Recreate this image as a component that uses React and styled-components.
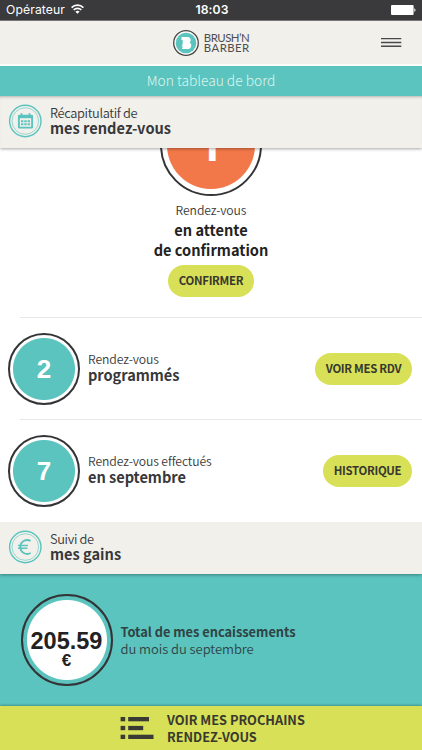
import styled, { createGlobalStyle } from "styled-components"

export default function App() {
    return (
        <Screen>
            <GlobalStyle />
            <StatusBar>
                <Operator>
                    Opérateur
                    <WifiIcon />
                </Operator>
                <Clock>18:03</Clock>
                <BatteryIcon />
            </StatusBar>

            <Header>
                <Logo>
                    <LogoMark />
                    <LogoName>
                        <LogoLine $spacing="-0.5px">BRUSH’N</LogoLine>
                        <LogoLine $spacing="0.45px">BARBER</LogoLine>
                    </LogoName>
                </Logo>
                <BurgerIcon />
            </Header>
            <PageTitle>Mon tableau de bord</PageTitle>

            <SectionHeader $raised>
                <CalendarIcon />
                <SectionText>
                    <Line $size={12.8} $height={15} $spacing={-0.34}>Récapitulatif de</Line>
                    <Line $size={14.6} $height={16} $bold>mes rendez-vous</Line>
                </SectionText>
            </SectionHeader>

            <Scroll>
                <Pending>
                    <Ring $size={102} $gap={5} $fill="#f37849">
                        <PendingNumber>1</PendingNumber>
                    </Ring>
                    <PendingText>
                        <Line $size={12.2} $height={19} $spacing={-0.1}>Rendez-vous</Line>
                        <Line $size={14.6} $height={20} $bold $color="#222223">en attente</Line>
                        <Line $size={14.6} $height={20} $bold $color="#222223">de confirmation</Line>
                    </PendingText>
                    <Button $width={86}>CONFIRMER</Button>
                </Pending>
                <Divider />
                <Row number="2" title="Rendez-vous" detail="programmés" action="VOIR MES RDV" width={97} />
                <Divider />
                <Row number="7" title="Rendez-vous effectués" detail="en septembre" action="HISTORIQUE" width={89} />
            </Scroll>

            <SectionHeader>
                <EuroIcon />
                <SectionText>
                    <Line $size={12.8} $height={15} $spacing={-0.34}>Suivi de</Line>
                    <Line $size={14.6} $height={16} $bold>mes gains</Line>
                </SectionText>
            </SectionHeader>

            <Earnings>
                <Ring $size={92} $gap={4} $fill="#ffffff">
                    <Amount>205.59</Amount>
                    <Currency>€</Currency>
                </Ring>
                <EarningsText>
                    <Line $size={12.8} $height={17} $bold>Total de mes encaissements</Line>
                    <Line $size={13} $height={18} $spacing={-0.05}>du mois du septembre</Line>
                </EarningsText>
            </Earnings>

            <Footer>
                <ListIcon />
                <FooterText>
                    <Line $size={12.75} $height={17.5} $bold>VOIR MES PROCHAINS</Line>
                    <Line $size={12.75} $height={17.5} $bold>RENDEZ-VOUS</Line>
                </FooterText>
            </Footer>
        </Screen>
    )
}

function Row({ number, title, detail, action, width }) {
    return (
        <RowBox>
            <Ring $size={72} $gap={3} $fill="#5bc4be">
                <RowNumber>{number}</RowNumber>
            </Ring>
            <RowText>
                <Line $size={12.2} $height={16} $spacing={-0.1}>{title}</Line>
                <Line $size={14.6} $height={16} $spacing={-0.04} $bold>{detail}</Line>
            </RowText>
            <Button $width={width}>{action}</Button>
        </RowBox>
    )
}

function WifiIcon() {
    return (
        <svg width="13" height="10" viewBox="0 0 13 10" fill="none" stroke="#fff" strokeWidth="1.6">
            <path d="M0.6 3.6a8.3 8.3 0 0 1 11.8 0" />
            <path d="M2.7 5.9a5.4 5.4 0 0 1 7.6 0" />
            <path d="M6.5 9.8 4.4 7.7a3 3 0 0 1 4.2 0z" fill="#fff" stroke="none" />
        </svg>
    )
}

function BatteryIcon() {
    return (
        <svg width="25" height="10" viewBox="0 0 25 10" fill="#fff">
            <rect width="22.6" height="10" rx="1" />
            <path d="M23.3 3.2c1.6.4 1.6 3.2 0 3.6z" />
        </svg>
    )
}

function BurgerIcon() {
    return (
        <svg width="21" height="12" viewBox="0 0 21 12" stroke="#48484a" strokeWidth="1.4">
            <path d="M0 1.6h20.3M0 5.5h20.3M0 9.3h20.3" />
        </svg>
    )
}

function LogoMark() {
    return (
        <svg width="27" height="27" viewBox="0 0 27 27">
            <circle cx="13" cy="13" r="12.3" fill="#fafaf7" stroke="#47474a" strokeWidth="1.3" />
            <circle cx="13" cy="13" r="10.3" fill="#5bc4be" />
            <path
                d="M8.500 6.900h5.600c2.300 0 3.600 1.100 3.600 3 0 1.200-.5 2-1.300 2.500 1.200.5 1.900 1.500 1.900 3 0 2.300-1.500 3.700-4 3.700H8.900v-1h.8v-.8h-.8v-1h.8v-.8h-.8v-1h.8V10H8.500z"
                fill="#fff"
            />
        </svg>
    )
}

function CalendarIcon() {
    return (
        <svg width="34" height="34" viewBox="0 0 34 34" fill="none" stroke="#5bc4be">
            <circle cx="17.3" cy="17" r="15.7" strokeWidth="1.4" />
            <circle cx="17.3" cy="17" r="13.3" strokeWidth="0.6" />
            <rect x="10.9" y="11.8" width="13.2" height="11.8" rx="0.6" strokeWidth="1.9" />
            <path d="M10.2 12.6h14.6" strokeWidth="3.2" />
            <path d="M13.5 9.3v3M21.5 9.3v3" strokeWidth="1.8" />
            <path d="M13 17.3h9M13 20.3h9" strokeWidth="2" strokeDasharray="2.4 0.9" />
        </svg>
    )
}

function EuroIcon() {
    return (
        <svg width="34" height="34" viewBox="0 0 34 34" fill="none" stroke="#5bc4be">
            <circle cx="17.3" cy="17" r="15.7" strokeWidth="1.4" />
            <circle cx="17.3" cy="17" r="13.3" strokeWidth="0.6" />
            <path d="M22.6 11a6.9 6.9 0 1 0 0 12" strokeWidth="1.9" />
            <path d="M10 15.5h10M10 18.2h9.4" strokeWidth="1.5" />
        </svg>
    )
}

function ListIcon() {
    return (
        <svg width="34" height="24" viewBox="0 0 34 24" fill="#3a3a35">
            <rect x="0.6" y="1" width="4.6" height="4.3" />
            <rect x="8.2" y="1" width="20.8" height="4.3" />
            <rect x="0.6" y="9.9" width="4.6" height="4.3" />
            <rect x="8.2" y="9.9" width="15" height="4.3" />
            <rect x="0.6" y="18.7" width="4.6" height="4.3" />
            <rect x="8.2" y="18.7" width="25.3" height="4.3" />
        </svg>
    )
}

const GlobalStyle = createGlobalStyle`
    * {
        box-sizing: border-box;
    }
    body {
        margin: 0;
        font-family: "Noto Sans CJK SC", "Open Sans", sans-serif;
        color: #38383a;
    }
    svg {
        flex: none;
        display: block;
    }
`
const Screen = styled.div`
    display: flex;
    flex-direction: column;
    width: 422px;
    height: 750px;
    overflow: hidden;
    background-color: #ffffff;
`
const StatusBar = styled.div`
    display: grid;
    grid-template-columns: 1fr auto 1fr;
    align-items: center;
    flex: none;
    height: 21px;
    padding: 0 6px;
    background-color: #3a3a3c;
    border-bottom: 1px solid #77777a;
    color: #ffffff;
    font-family: Inter, sans-serif;
    font-size: 12.2px;
    line-height: 20px;

    > svg {
        justify-self: end;
        margin-top: -1px;
    }
`
const Operator = styled.div`
    display: flex;
    align-items: center;
    gap: 6px;
    letter-spacing: 0.1px;
    svg {
        margin-top: -2px;
    }
`
const Clock = styled.div`
    padding-left: 2px;
    font-weight: 600;
    letter-spacing: 0.1px;
`
const Header = styled.div`
    display: grid;
    grid-template-columns: 1fr auto 1fr;
    align-items: center;
    flex: none;
    height: 45px;
    padding: 0 20.5px;
    background-color: #f1f0eb;
    border-bottom: 2px solid #fafcfa;

    > svg {
        justify-self: end;
    }
`
const Logo = styled.div`
    grid-column: 2;
    display: flex;
    align-items: center;
    gap: 3.5px;
    padding-left: 1px;
    margin-top: 1px;
`
const LogoName = styled.div`
    display: flex;
    flex-direction: column;
    margin-top: -1px;
`
const LogoLine = styled.div`
    height: 10px;
    font-family: Lato, sans-serif;
    font-size: 11.4px;
    line-height: 10px;
    letter-spacing: ${(props) => props.$spacing};
    color: #4d4d4f;
`
const PageTitle = styled.div`
    flex: none;
    height: 30px;
    background-color: #5bc4be;
    color: #dff5f2;
    font-size: 13.8px;
    font-weight: 300;
    line-height: 28px;
    text-align: center;
`
const SectionHeader = styled.div`
    position: relative;
    z-index: 1;
    display: flex;
    align-items: center;
    flex: none;
    gap: 8px;
    height: 52px;
    padding: 0 8px;
    background-color: #f1f0eb;
    box-shadow: 0 1px 3px rgba(0, 0, 0, 0.35)${(props) => (props.$raised ? ", inset 0 3px 3px -2px rgba(0, 0, 0, 0.25)" : "")};
    clip-path: inset(0 0 -6px 0);
    svg {
        margin-top: -3px;
    }
`
const SectionText = styled.div`
    margin-top: -3px;
`
const Line = styled.div`
    height: ${(props) => props.$height}px;
    font-size: ${(props) => props.$size}px;
    font-weight: ${(props) => (props.$bold ? 700 : 350)};
    line-height: ${(props) => props.$height}px;
    letter-spacing: ${(props) => props.$spacing || 0}px;
    color: ${(props) => props.$color || "inherit"};
    white-space: nowrap;
`
const Scroll = styled.div`
    flex: none;
    height: 374px;
    overflow: hidden;
`
/* the list is scrolled, the first ring goes under the section header */
const Pending = styled.div`
    display: flex;
    flex-direction: column;
    align-items: center;
    height: 223px;
    margin-top: -54px;
`
const Ring = styled.div`
    display: flex;
    flex-direction: column;
    align-items: center;
    justify-content: center;
    flex: none;
    width: ${(props) => props.$size}px;
    height: ${(props) => props.$size}px;
    border: 2px solid #343438;
    border-radius: 50%;
    background: radial-gradient(
        circle closest-side,
        ${(props) => props.$fill} ${(props) => props.$size / 2 - props.$gap - 2.5}px,
        transparent ${(props) => props.$size / 2 - props.$gap - 1.5}px
    );
    font-family: "Liberation Sans", sans-serif;
    font-weight: 700;
`
const PendingNumber = styled.div`
    padding-right: 4px;
    color: #ffffff;
    font-family: Inter, sans-serif;
    font-size: 44px;
    line-height: 52px;
`
const RowNumber = styled.div`
    color: #ffffff;
    font-size: 26px;
    line-height: 30px;
`
const PendingText = styled.div`
    margin-top: 5px;
    text-align: center;
`
const Button = styled.button`
    flex: none;
    width: ${(props) => props.$width}px;
    height: 32px;
    padding: 0 0 1px;
    border: none;
    border-radius: 16px;
    background-color: #d7e057;
    color: #38382f;
    font-family: inherit;
    font-size: 11.4px;
    font-weight: 700;
    line-height: 31px;
    letter-spacing: -0.3px;
    white-space: nowrap;

    ${PendingText} + & {
        margin-top: 5px;
    }
`
const Divider = styled.div`
    height: 1px;
    margin-left: 20px;
    background-color: #e8e8e8;
`
const RowBox = styled.div`
    display: flex;
    align-items: center;
    height: 101px;
    padding: 0 10px 0 8px;
    ${Button} {
        margin-left: auto;
    }
`
const RowText = styled.div`
    margin-left: 8px;
    margin-top: -4px;
`
const Earnings = styled.div`
    display: flex;
    align-items: center;
    flex: none;
    height: 132px;
    padding-left: 20.5px;
    background-color: #5bc4be;
`
const Amount = styled.div`
    color: #222223;
    font-size: 23.5px;
    line-height: 24px;
    margin-top: 16px;
`
const Currency = styled.div`
    color: #222223;
    font-size: 17px;
    line-height: 15px;
`
const EarningsText = styled.div`
    margin-left: 8px;
    color: #2f4345;
`
const Footer = styled.div`
    display: flex;
    align-items: center;
    flex: none;
    height: 44px;
    padding-left: 120px;
    background-color: #d7e057;
    box-shadow: 0 -1px 2px rgba(0, 0, 0, 0.25);
`
const FooterText = styled.div`
    margin-left: 13px;
    color: #38382f;
`
